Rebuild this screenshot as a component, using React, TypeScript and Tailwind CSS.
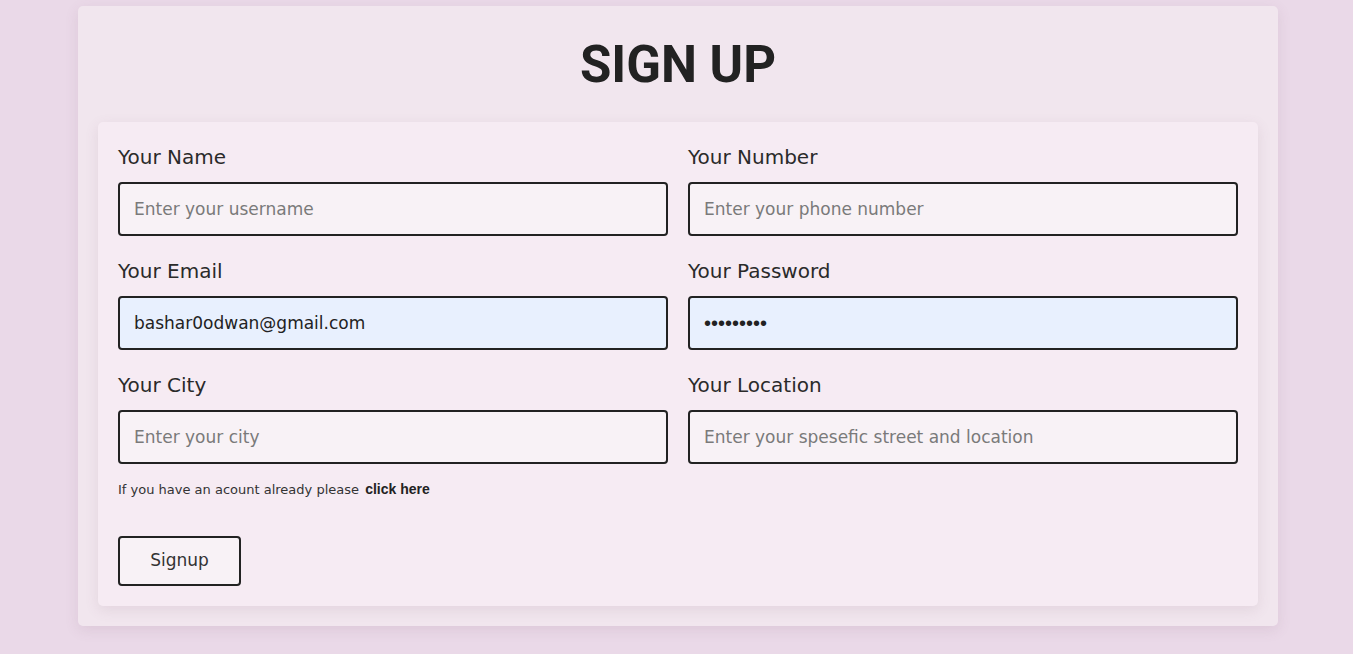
import React from 'react'

const fields = [
  { label: 'Your Name', placeholder: 'Enter your username', type: 'text', value: '' },
  { label: 'Your Number', placeholder: 'Enter your phone number', type: 'text', value: '' },
  { label: 'Your Email', placeholder: 'Enter your email', type: 'email', value: 'bashar0odwan@gmail.com' },
  { label: 'Your Password', placeholder: 'Enter your password', type: 'password', value: '123456789' },
  { label: 'Your City', placeholder: 'Enter your city', type: 'text', value: '' },
  { label: 'Your Location', placeholder: 'Enter your spesefic street and location', type: 'text', value: '' },
]

function inputClass(type: string, filled: boolean) {
  const base =
    'mt-[10px] h-[54px] rounded-[4px] border-2 border-[#222] px-[14px] text-[#222] outline-none placeholder:text-[#7a7a7a]'
  if (type === 'password') return base + " bg-[#e8f0fe] font-['Liberation_Sans',sans-serif] text-[20px]"
  if (filled) return base + ' bg-[#e8f0fe] text-[17px]'
  return base + ' bg-[#f8f2f6] text-[17px]'
}

export default function App() {
  return (
    <div className="min-h-screen bg-[#ead9e8] pt-[6px] pb-[28px] font-['DejaVu_Sans',sans-serif] text-[#222]">
      <div className="ml-[78px] w-[1200px] rounded-[5px] bg-[#f1e6ee] px-5 pb-5 shadow-[0_4px_14px_rgba(120,80,110,0.12)]">
        <div className="flex h-[116px] items-center justify-center">
          <h1 className="font-['Roboto',sans-serif] text-[51px] font-bold leading-none text-[#222]">SIGN UP</h1>
        </div>

        <form
          className="rounded-[5px] bg-[#f6ebf3] p-5 shadow-[0_4px_14px_rgba(120,80,110,0.12)]"
          onSubmit={(e) => e.preventDefault()}
        >
          <div className="grid grid-cols-2 gap-x-5 gap-y-5">
            {fields.map((field) => (
              <div key={field.label} className="flex flex-col">
                <label className="h-[30px] text-[20px] leading-[30px] text-[#2a2a2a]">{field.label}</label>
                <input
                  type={field.type}
                  defaultValue={field.value}
                  placeholder={field.placeholder}
                  className={inputClass(field.type, field.value !== '')}
                />
              </div>
            ))}
          </div>

          <p className="mt-[15px] h-[20px] text-[13px] leading-[20px] text-[#333]">
            If you have an acount already please{' '}
            <a className="ml-[2px] font-['Liberation_Sans',sans-serif] text-[14px] font-bold text-[#222]">click here</a>
          </p>

          <button
            type="submit"
            className="mt-[37px] h-[50px] w-[123px] rounded-[4px] border-2 border-[#222] bg-[#f8f2f6] text-[17px] text-[#333]"
          >
            Signup
          </button>
        </form>
      </div>
    </div>
  )
}
